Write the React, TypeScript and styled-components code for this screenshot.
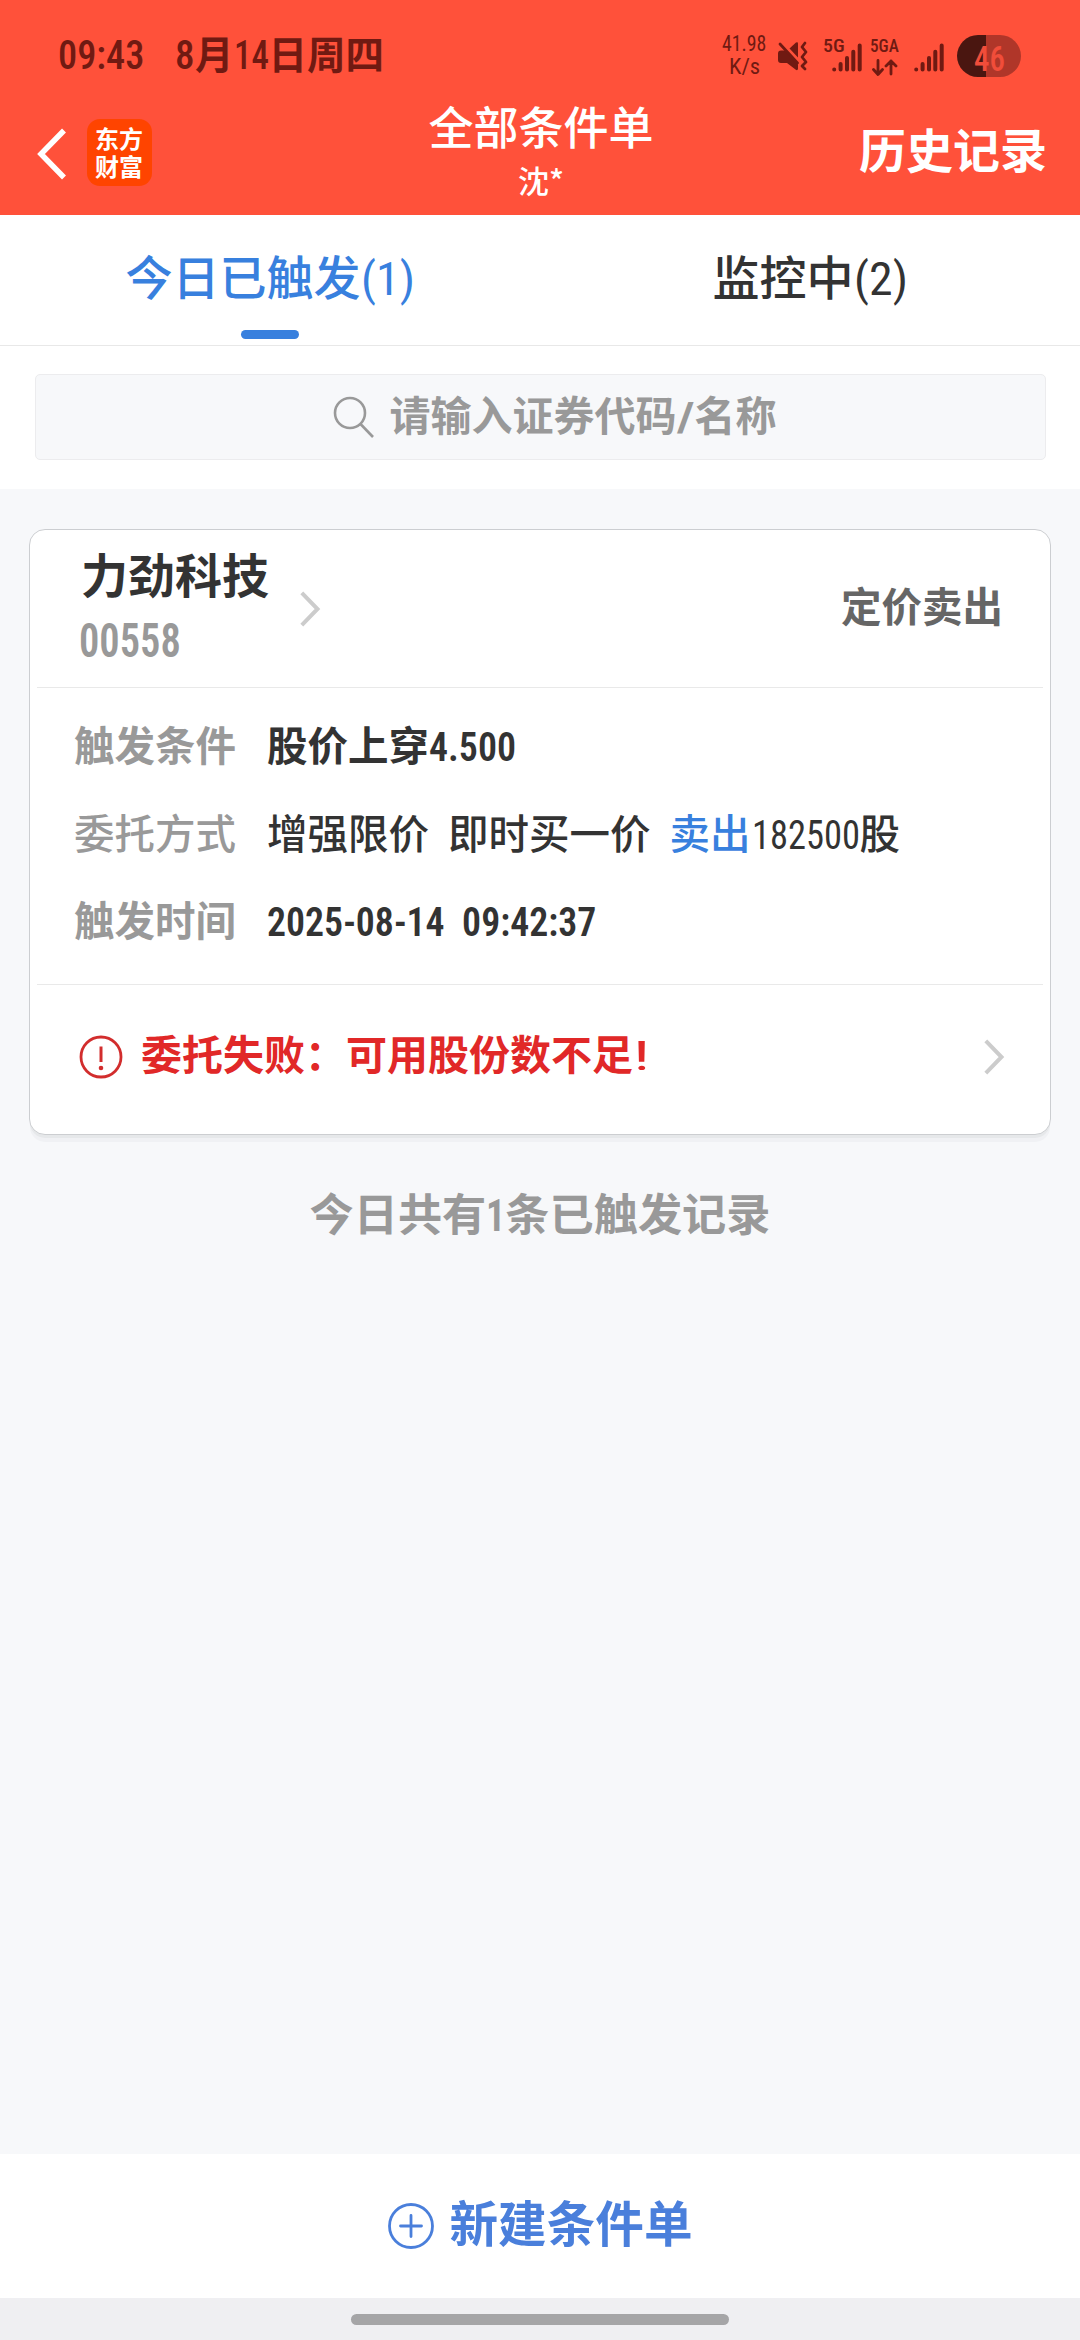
import React, { useLayoutEffect, useRef, useState } from "react";
import styled, { createGlobalStyle } from "styled-components";

const GlobalStyle = createGlobalStyle`
  * { box-sizing: border-box; }
  body {
    margin: 0;
    background: #f7f8fa;
    font-family: "Noto Sans CJK SC", "Noto Sans", sans-serif;
    color: #333;
  }
`;

/* Condensed digits and Latin text, squeezed to a given width */
const FitBox = styled.span<{ $w: number; $weight?: number }>`
  display: inline-block;
  flex: none;
  width: ${(p) => p.$w}px;
  white-space: pre;
  text-align: left;
  font-family: Roboto, "Noto Sans CJK SC", sans-serif;
  font-stretch: 75%;
  font-weight: ${(p) => p.$weight ?? "inherit"};
`;
const FitInner = styled.span`
  display: inline-block;
  transform-origin: 0 50%;
`;
function Fit({ w, weight, children }: { w: number; weight?: number; children: React.ReactNode }) {
  const ref = useRef<HTMLSpanElement>(null);
  const [scale, setScale] = useState(1);
  useLayoutEffect(() => {
    if (ref.current) setScale(w / ref.current.offsetWidth);
  }, [w]);
  return (
    <FitBox $w={w} $weight={weight}>
      <FitInner ref={ref} style={{ transform: `scaleX(${scale})` }}>
        {children}
      </FitInner>
    </FitBox>
  );
}

const Screen = styled.div`
  display: flex;
  flex-direction: column;
  width: 1080px;
  height: 2340px;
  overflow: hidden;
`;

/* ---------- status bar ---------- */
const Top = styled.header`
  height: 215px;
  background: #ff513a;
`;
const StatusBar = styled.div`
  display: flex;
  align-items: flex-start;
  height: 100px;
  padding: 32px 59px 0 58px;
  color: #701a12;
  font-weight: 500;
`;
const Clock = styled.div`
  display: flex;
  flex: 1;
  align-items: baseline;
  gap: 31px;
  margin-top: -2px;
  font-size: 41px;
  line-height: 44px;
`;
const DateText = styled.span`
  display: flex;
  align-items: baseline;
`;
const DateWord = styled.span`
  font-size: 38.5px;
  font-weight: 700;
`;
const Speed = styled.div`
  display: flex;
  flex-direction: column;
  align-items: center;
  width: 44px;
  font-size: 22px;
  line-height: 23px;
`;
const StatusIcon = styled.svg<{ $ml?: number; $mt?: number }>`
  display: block;
  flex: none;
  margin: ${(p) => p.$mt ?? 0}px 0 0 ${(p) => p.$ml ?? 0}px;
`;
const Signal = styled.div<{ $ml: number; $w: number }>`
  display: flex;
  flex-direction: column;
  width: ${(p) => p.$w}px;
  margin-left: ${(p) => p.$ml}px;
  padding-top: 3px;
  font-size: 19px;
  line-height: 22px;
`;
const Battery = styled.div`
  width: 64px;
  height: 42px;
  margin: 3px 0 0 13px;
  padding-left: 17px;
  border-radius: 21px;
  background: linear-gradient(90deg, #4a1610 29px, #b03629 29px);
  color: #f14d3a;
  font-size: 35px;
  line-height: 41px;
`;

/* ---------- title bar ---------- */
const TitleBar = styled.div`
  display: grid;
  grid-template-columns: 1fr 300px 1fr;
  height: 115px;
  color: #fff;
`;
const TitleLeft = styled.div`
  display: flex;
  align-items: flex-start;
  gap: 21px;
  padding: 19px 0 0 37px;
`;
const BackIcon = styled.svg`
  display: block;
  margin-top: 9px;
`;
const Logo = styled.div`
  width: 65px;
  height: 67px;
  padding: 5px 0 0 8px;
  border-radius: 13px;
  background: #ff4400;
  font-size: 24px;
  font-weight: 700;
  line-height: 28px;
`;
const TitleCenter = styled.div`
  display: flex;
  flex-direction: column;
  align-items: center;
  padding-left: 2px;
`;
const Title = styled.h1`
  margin: 0;
  font-size: 45px;
  font-weight: 500;
  line-height: 52px;
`;
const Account = styled.div`
  margin-top: 8px;
  font-size: 31px;
  font-weight: 500;
  line-height: 40px;
`;
const HistoryLink = styled.div`
  justify-self: end;
  padding-right: 33px;
  font-size: 47px;
  font-weight: 700;
  line-height: 95px;
`;

/* ---------- tabs & search ---------- */
const Tabs = styled.nav`
  display: flex;
  height: 131px;
  background: #fff;
  border-bottom: 1px solid #e8e8e8;
`;
const Tab = styled.div<{ $active?: boolean }>`
  display: flex;
  flex: 1;
  flex-direction: column;
  align-items: center;
  padding-top: 30px;
  color: ${(p) => (p.$active ? "#3880de" : "#333")};
  font-size: 47px;
  font-weight: 500;
  line-height: 60px;
`;
const TabLabel = styled.div`
  display: flex;
  align-items: baseline;
  height: 60px;
`;
const Indicator = styled.div`
  width: 58px;
  height: 9px;
  margin-top: 25px;
  border-radius: 5px;
  background: #3880de;
`;
const SearchArea = styled.div`
  height: 143px;
  padding: 28px 34.5px 0;
  background: #fff;
`;
const SearchBox = styled.div`
  display: flex;
  align-items: center;
  height: 86px;
  padding-left: 297px;
  gap: 15px;
  border: 1px solid #ececee;
  border-radius: 5px;
  background: #f7f8fa;
`;
const Placeholder = styled.span`
  margin-top: -4px;
  color: #999;
  font-size: 41px;
  font-weight: 700;
  line-height: 60px;
`;

/* ---------- card ---------- */
const Content = styled.main`
  flex: 1;
  padding: 40px 29px 0;
  background: #f7f8fa;
`;
const Card = styled.section`
  height: 606px;
  padding: 0 7px;
  border: 1px solid #ccced1;
  border-radius: 16px;
  background: #fff;
  box-shadow: 0 4px 0 -1px #e6e8ea, 0 8px 0 -1px #f0f1f4;
`;
const CardHead = styled.div`
  display: flex;
  justify-content: space-between;
  height: 158px;
  padding: 0 40px 0 44px;
  border-bottom: 1px solid #e9e9e9;
`;
const Stock = styled.div`
  display: flex;
  gap: 31px;
`;
const StockName = styled.div`
  height: 60px;
  margin-top: 13px;
  font-size: 47px;
  font-weight: 700;
  line-height: 60px;
`;
const StockCode = styled.div`
  display: flex;
  margin-left: -2px;
  color: #999;
  font-size: 48px;
  font-weight: 600;
  line-height: 75px;
`;
const Chevron = styled.svg<{ $mt: number }>`
  display: block;
  flex: none;
  margin-top: ${(p) => p.$mt}px;
`;
const OrderType = styled.div`
  color: #666;
  font-size: 40.5px;
  font-weight: 700;
  line-height: 149px;
`;
const Details = styled.div`
  height: 297px;
  padding: 12px 0 0 37px;
  border-bottom: 1px solid #e9e9e9;
`;
const Row = styled.div<{ $bold?: boolean }>`
  display: flex;
  align-items: baseline;
  height: 87.5px;
  font-size: 40.5px;
  font-weight: ${(p) => (p.$bold ? 700 : 500)};
  line-height: 87px;
`;
const Label = styled.div`
  width: 193px;
  color: #999;
`;
const Value = styled.div`
  display: flex;
  align-items: baseline;
`;
const Phrase = styled.span`
  margin-right: 19px;
`;
const Sell = styled.span`
  margin-right: 1px;
  color: #3880de;
`;
const Failure = styled.div`
  display: flex;
  justify-content: space-between;
  height: 149px;
  padding: 0 38px 0 42px;
`;
const FailureMessage = styled.div`
  display: flex;
  align-items: center;
  gap: 18px;
  height: 143px;
  color: #e12828;
  font-size: 41px;
  font-weight: 700;
`;
const FailureText = styled.span`
  margin-top: -6px;
  line-height: 60px;
`;
const Summary = styled.p`
  display: flex;
  align-items: baseline;
  justify-content: center;
  margin: 47px 0 0;
  color: #999;
  font-size: 44.2px;
  font-weight: 700;
  line-height: 60px;
`;

/* ---------- bottom ---------- */
const CreateBar = styled.footer`
  display: flex;
  align-items: center;
  justify-content: center;
  gap: 16px;
  height: 144px;
  background: #fff;
  color: #4a7fdb;
  font-size: 48.6px;
  font-weight: 700;
`;
const CreateLabel = styled.span`
  margin-top: -11px;
  line-height: 60px;
`;
const HomeArea = styled.div`
  display: flex;
  justify-content: center;
  height: 42px;
  padding-top: 16px;
  background: #efeff2;
`;
const HomePill = styled.div`
  width: 378px;
  height: 11px;
  border-radius: 6px;
  background: #a5a5a7;
`;

const SignalBars = ({ ml, mt }: { ml: number; mt: number }) => (
  <StatusIcon $ml={ml} $mt={mt} width="30" height="30" viewBox="0 0 30 30" stroke="#701a12" strokeWidth="4" strokeLinecap="round">
    <path d="M2.2 26.4v.1M8.6 21v5.5M15 15v11.500M21.300 8.700v17.800M27.700 2.600v23.900" />
  </StatusIcon>
);

const ChevronRight = ({ mt }: { mt: number }) => (
  <Chevron $mt={mt} width="21" height="36" viewBox="0 0 21 36" fill="none" stroke="#ccc" strokeWidth="4">
    <path d="M1.800 1.800L17.500 18L1.800 34.200" />
  </Chevron>
);

export default function App() {
  return (
    <Screen>
      <GlobalStyle />
      <Top>
        <StatusBar>
          <Clock>
            <Fit w={86}>09:43</Fit>
            <DateText>
              <Fit w={20}>8</Fit>
              <DateWord>月</DateWord>
              <Fit w={35}>14</Fit>
              <DateWord>日周四</DateWord>
            </DateText>
          </Clock>
          <Speed>
            <Fit w={44} weight={400}>41.98</Fit>
            <Fit w={31} weight={400}>K/s</Fit>
          </Speed>
          <StatusIcon $ml={11} $mt={3} width="32" height="36" viewBox="0 0 32 36" fill="#701a12">
            <path d="M4 15.500H8L21 29.500V34Q20.500 36 18.500 34.500L10 28H4Q1 28 1 25V18.500Q1 15.500 4 15.500Z" />
            <path d="M3 9L20.500 28" stroke="#701a12" strokeWidth="2.800" strokeLinecap="round" />
            <path d="M19 7.500Q21 6.500 21 8.500V22.500L12.500 13.500Z" />
            <path d="M28 8L25 12L29 17L25 22L29 27L25 31L28 34" fill="none" stroke="#701a12" strokeWidth="2.800" strokeLinejoin="round" strokeLinecap="round" />
          </StatusIcon>
          <Signal $ml={14} $w={38}>
            <Fit w={22}>5G</Fit>
            <SignalBars ml={9} mt={-14} />
          </Signal>
          <Signal $ml={9} $w={29}>
            <Fit w={29}>5GA</Fit>
            <StatusIcon $ml={2} $mt={2} width="27" height="18" viewBox="0 0 27 18" fill="none" stroke="#701a12" strokeWidth="2.800" strokeLinecap="round" strokeLinejoin="round">
              <path d="M6 1.500V15M1.500 10.500L6 15.500L10.500 10.500M19 15V2M14 7L19 2L24 7" />
            </StatusIcon>
          </Signal>
          <SignalBars ml={15} mt={11} />
          <Battery>
            <Fit w={31}>46</Fit>
          </Battery>
        </StatusBar>
        <TitleBar>
          <TitleLeft>
            <BackIcon width="29" height="52" viewBox="0 0 29 52" fill="none" stroke="#fff" strokeWidth="5.500">
              <path d="M27 2.500L4 26L27 49.500" />
            </BackIcon>
            <Logo>
              东方
              <br />
              财富
            </Logo>
          </TitleLeft>
          <TitleCenter>
            <Title>全部条件单</Title>
            <Account>沈*</Account>
          </TitleCenter>
          <HistoryLink>历史记录</HistoryLink>
        </TitleBar>
      </Top>

      <Tabs>
        <Tab $active>
          <TabLabel>
            <span>今日已触发</span>
            <Fit w={54} weight={400}>(1)</Fit>
          </TabLabel>
          <Indicator />
        </Tab>
        <Tab>
          <TabLabel>
            <span>监控中</span>
            <Fit w={54} weight={400}>(2)</Fit>
          </TabLabel>
        </Tab>
      </Tabs>

      <SearchArea>
        <SearchBox>
          <svg width="42" height="42" viewBox="0 0 42 42" fill="none" stroke="#999" strokeWidth="2.600">
            <circle cx="17" cy="17" r="15" />
            <path d="M27.500 28L40 41" />
          </svg>
          <Placeholder>
            请输入证券代码
            <Fit w={18}>/</Fit>
            名称
          </Placeholder>
        </SearchBox>
      </SearchArea>

      <Content>
        <Card>
          <CardHead>
            <Stock>
              <div>
                <StockName>力劲科技</StockName>
                <StockCode>
                  <Fit w={102}>00558</Fit>
                </StockCode>
              </div>
              <ChevronRight mt={61} />
            </Stock>
            <OrderType>定价卖出</OrderType>
          </CardHead>
          <Details>
            <Row $bold>
              <Label>触发条件</Label>
              <Value>
                股价上穿<Fit w={87} weight={600}>4.500</Fit>
              </Value>
            </Row>
            <Row>
              <Label>委托方式</Label>
              <Value>
                <Phrase>增强限价</Phrase>
                <Phrase>即时买一价</Phrase>
                <Sell>卖出</Sell>
                <Fit w={108} weight={400}>182500</Fit>股
              </Value>
            </Row>
            <Row $bold>
              <Label>触发时间</Label>
              <Value>
                <Fit w={329} weight={600}>2025-08-14  09:42:37</Fit>
              </Value>
            </Row>
          </Details>
          <Failure>
            <FailureMessage>
              <svg width="44" height="44" viewBox="0 0 44 44" fill="none" stroke="#d22d2d" strokeWidth="2.800">
                <circle cx="22" cy="22" r="20" />
                <path d="M22 11.500V27" strokeWidth="3" />
                <circle cx="22" cy="33" r="2.300" fill="#d22d2d" stroke="none" />
              </svg>
              <FailureText>
                委托失败：可用股份数不足<Fit w={17} weight={400}>!</Fit>
              </FailureText>
            </FailureMessage>
            <ChevronRight mt={54} />
          </Failure>
        </Card>
        <Summary>
          今日共有<Fit w={19}>1</Fit>条已触发记录
        </Summary>
      </Content>

      <CreateBar>
        <svg width="46" height="46" viewBox="0 0 46 46" fill="none" stroke="#4a7fdb" strokeWidth="2.800" strokeLinecap="round">
          <circle cx="23" cy="23" r="21.500" />
          <path d="M12.500 23H33.500M23 12.500V33.500" />
        </svg>
        <CreateLabel>新建条件单</CreateLabel>
      </CreateBar>
      <HomeArea>
        <HomePill />
      </HomeArea>
    </Screen>
  );
}
